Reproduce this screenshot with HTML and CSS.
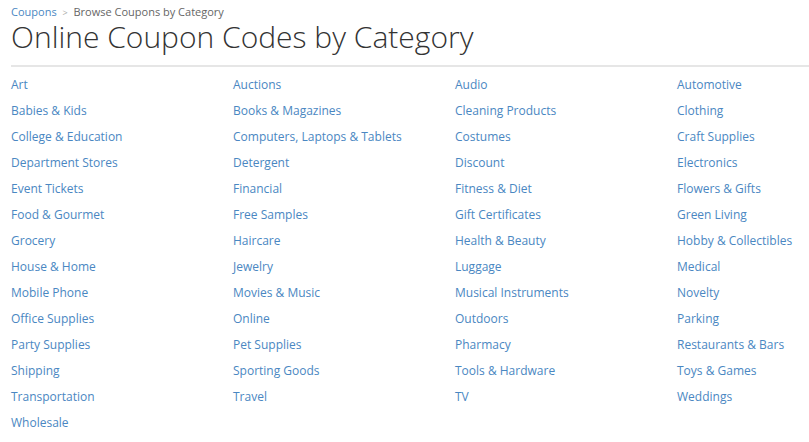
FILE: index.html
```html
<!DOCTYPE html>
<html>
<head>
    <link rel="stylesheet" href="styles.css">
</head>
<body>
    <div class="page">
        <div class="crumbs">
            <a href="#">Coupons</a>
            <span class="sep">&gt;</span>
            <span>Browse Coupons by Category</span>
        </div>
        <h1 class="title">Online Coupon Codes by Category</h1>
        <ul class="categories">
            <li><a href="#">Art</a></li>
            <li><a href="#">Auctions</a></li>
            <li><a href="#">Audio</a></li>
            <li><a href="#">Automotive</a></li>
            <li><a href="#">Babies &amp; Kids</a></li>
            <li><a href="#">Books &amp; Magazines</a></li>
            <li><a href="#">Cleaning Products</a></li>
            <li><a href="#">Clothing</a></li>
            <li><a href="#">College &amp; Education</a></li>
            <li><a href="#">Computers, Laptops &amp; Tablets</a></li>
            <li><a href="#">Costumes</a></li>
            <li><a href="#">Craft Supplies</a></li>
            <li><a href="#">Department Stores</a></li>
            <li><a href="#">Detergent</a></li>
            <li><a href="#">Discount</a></li>
            <li><a href="#">Electronics</a></li>
            <li><a href="#">Event Tickets</a></li>
            <li><a href="#">Financial</a></li>
            <li><a href="#">Fitness &amp; Diet</a></li>
            <li><a href="#">Flowers &amp; Gifts</a></li>
            <li><a href="#">Food &amp; Gourmet</a></li>
            <li><a href="#">Free Samples</a></li>
            <li><a href="#">Gift Certificates</a></li>
            <li><a href="#">Green Living</a></li>
            <li><a href="#">Grocery</a></li>
            <li><a href="#">Haircare</a></li>
            <li><a href="#">Health &amp; Beauty</a></li>
            <li><a href="#">Hobby &amp; Collectibles</a></li>
            <li><a href="#">House &amp; Home</a></li>
            <li><a href="#">Jewelry</a></li>
            <li><a href="#">Luggage</a></li>
            <li><a href="#">Medical</a></li>
            <li><a href="#">Mobile Phone</a></li>
            <li><a href="#">Movies &amp; Music</a></li>
            <li><a href="#">Musical Instruments</a></li>
            <li><a href="#">Novelty</a></li>
            <li><a href="#">Office Supplies</a></li>
            <li><a href="#">Online</a></li>
            <li><a href="#">Outdoors</a></li>
            <li><a href="#">Parking</a></li>
            <li><a href="#">Party Supplies</a></li>
            <li><a href="#">Pet Supplies</a></li>
            <li><a href="#">Pharmacy</a></li>
            <li><a href="#">Restaurants &amp; Bars</a></li>
            <li><a href="#">Shipping</a></li>
            <li><a href="#">Sporting Goods</a></li>
            <li><a href="#">Tools &amp; Hardware</a></li>
            <li><a href="#">Toys &amp; Games</a></li>
            <li><a href="#">Transportation</a></li>
            <li><a href="#">Travel</a></li>
            <li><a href="#">TV</a></li>
            <li><a href="#">Weddings</a></li>
            <li><a href="#">Wholesale</a></li>
        </ul>
    </div>
</body>
</html>
```

FILE: styles.css
```css
* {
    margin: 0;
    padding: 0;
    box-sizing: border-box;
}

body {
    background: #fff;
    font-family: "Open Sans", sans-serif;
    color: #333;
    overflow: hidden;
}

a {
    color: #4a87c2;
    text-decoration: none;
}

.page {
    padding: 5px 0 0 11px;
}

.crumbs {
    font-size: 11px;
    line-height: 14px;
    color: #666;
}

.crumbs .sep {
    color: #aaa;
    font-size: 9px;
    margin: 0 3px;
}

.title {
    font-size: 30px;
    font-weight: 300;
    line-height: 34px;
    color: #333;
    padding-bottom: 11px;
    border-bottom: 2px solid #e6e6e6;
}

.categories {
    list-style: none;
    display: grid;
    grid-template-columns: repeat(3, 222px) 1fr;
    padding-top: 5px;
}

.categories li {
    font-size: 12px;
    line-height: 26px;
    white-space: nowrap;
}
```
